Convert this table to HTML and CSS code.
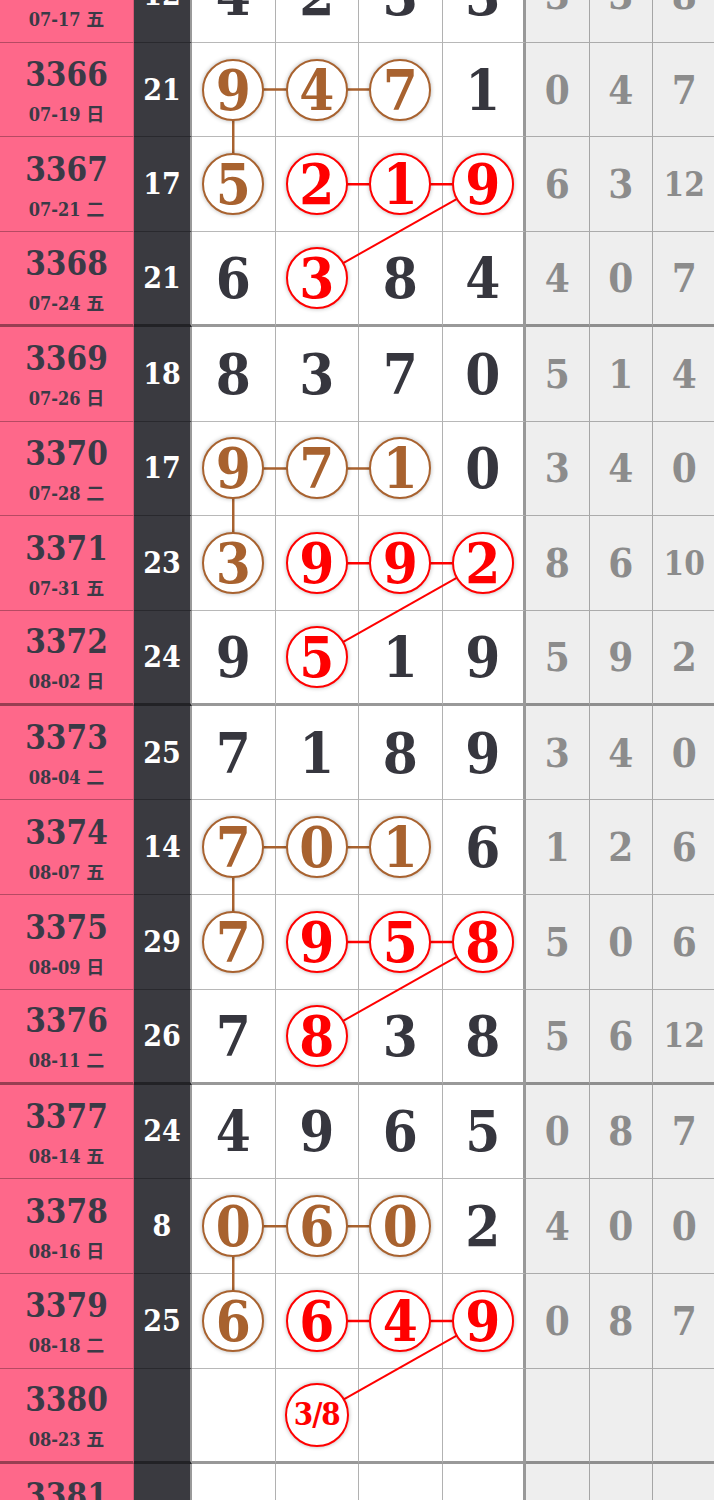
FILE: index.html
```html
<!DOCTYPE html>
<html>
<head>
    <meta charset="UTF-8">
    <title>走势图</title>
    <link rel="stylesheet" href="styles.css">
    <meta name="viewport" content="width=device-width, initial-scale=1">
</head>
<body>
    <div class="screen">
        <div class="board" id="board">
            <div class="grid" id="grid"></div>
            <svg class="links" id="links"></svg>
        </div>
    </div>
    <script>
        const rows = [
            { no: "3365", date: "07-17", week: "五", sum: "12", nums: ["4", "2", "3", "3"], miss: ["3", "3", "8"], balls: "...." },
            { no: "3366", date: "07-19", week: "日", sum: "21", nums: ["9", "4", "7", "1"], miss: ["0", "4", "7"], balls: "bbb." },
            { no: "3367", date: "07-21", week: "二", sum: "17", nums: ["5", "2", "1", "9"], miss: ["6", "3", "12"], balls: "brrr" },
            { no: "3368", date: "07-24", week: "五", sum: "21", nums: ["6", "3", "8", "4"], miss: ["4", "0", "7"], balls: ".r.." },
            { no: "3369", date: "07-26", week: "日", sum: "18", nums: ["8", "3", "7", "0"], miss: ["5", "1", "4"], balls: "...." },
            { no: "3370", date: "07-28", week: "二", sum: "17", nums: ["9", "7", "1", "0"], miss: ["3", "4", "0"], balls: "bbb." },
            { no: "3371", date: "07-31", week: "五", sum: "23", nums: ["3", "9", "9", "2"], miss: ["8", "6", "10"], balls: "brrr" },
            { no: "3372", date: "08-02", week: "日", sum: "24", nums: ["9", "5", "1", "9"], miss: ["5", "9", "2"], balls: ".r.." },
            { no: "3373", date: "08-04", week: "二", sum: "25", nums: ["7", "1", "8", "9"], miss: ["3", "4", "0"], balls: "...." },
            { no: "3374", date: "08-07", week: "五", sum: "14", nums: ["7", "0", "1", "6"], miss: ["1", "2", "6"], balls: "bbb." },
            { no: "3375", date: "08-09", week: "日", sum: "29", nums: ["7", "9", "5", "8"], miss: ["5", "0", "6"], balls: "brrr" },
            { no: "3376", date: "08-11", week: "二", sum: "26", nums: ["7", "8", "3", "8"], miss: ["5", "6", "12"], balls: ".r.." },
            { no: "3377", date: "08-14", week: "五", sum: "24", nums: ["4", "9", "6", "5"], miss: ["0", "8", "7"], balls: "...." },
            { no: "3378", date: "08-16", week: "日", sum: "8", nums: ["0", "6", "0", "2"], miss: ["4", "0", "0"], balls: "bbb." },
            { no: "3379", date: "08-18", week: "二", sum: "25", nums: ["6", "6", "4", "9"], miss: ["0", "8", "7"], balls: "brrr" },
            { no: "3380", date: "08-23", week: "五", sum: "", nums: ["", "3/8", "", ""], miss: ["", "", ""], balls: ".r.." },
            { no: "3381", date: "08-25", week: "日", sum: "", nums: ["", "", "", ""], miss: ["", "", ""], balls: "...." }
        ];

        const grid = document.getElementById("grid");

        rows.forEach((row, i) => {
            // every 4th row closes a block with a thick line
            const end = (i + 1) % 4 === 0 ? " block-end" : "";

            const noCell = document.createElement("div");
            noCell.className = "cell c-no" + end;
            noCell.innerHTML = `<span class="issue">${row.no}</span><span class="date">${row.date} <span class="week">${row.week}</span></span>`;
            grid.appendChild(noCell);

            const sumCell = document.createElement("div");
            sumCell.className = "cell c-sum" + end;
            sumCell.textContent = row.sum;
            grid.appendChild(sumCell);

            row.nums.forEach((n, col) => {
                const cell = document.createElement("div");
                cell.className = "cell c-num" + (col === 3 ? " edge" : "") + end;
                const mark = row.balls[col];
                if (mark !== ".") {
                    const ball = document.createElement("span");
                    ball.className = "ball " + (mark === "b" ? "brown" : "red") + (n.length > 1 ? " small" : "");
                    ball.id = `ball-${row.no}-${col}`;
                    ball.textContent = n;
                    cell.appendChild(ball);
                } else {
                    cell.textContent = n;
                }
                grid.appendChild(cell);
            });

            row.miss.forEach((m) => {
                const cell = document.createElement("div");
                cell.className = "cell c-miss" + (m.length > 1 ? " two" : "") + end;
                cell.textContent = m;
                grid.appendChild(cell);
            });
        });

        // chains: brown goes down-left then across, red goes across then down to col 2
        const chains = [];
        [3366, 3370, 3374, 3378].forEach((start) => {
            chains.push({ color: "#a8622f", cells: [[start + 1, 0], [start, 0], [start, 1], [start, 2]] });
            chains.push({ color: "#ff0000", cells: [[start + 1, 1], [start + 1, 2], [start + 1, 3], [start + 2, 1]] });
        });

        const board = document.getElementById("board");
        const svg = document.getElementById("links");
        const box = board.getBoundingClientRect();
        svg.setAttribute("width", box.width);
        svg.setAttribute("height", box.height);

        function center(no, col) {
            const el = document.getElementById(`ball-${no}-${col}`);
            const r = el.getBoundingClientRect();
            return [r.left + r.width / 2 - box.left, r.top + r.height / 2 - box.top];
        }

        chains.forEach((chain) => {
            for (let k = 0; k < chain.cells.length - 1; k++) {
                const a = center(...chain.cells[k]);
                const b = center(...chain.cells[k + 1]);
                const line = document.createElementNS("http://www.w3.org/2000/svg", "line");
                line.setAttribute("x1", a[0]);
                line.setAttribute("y1", a[1]);
                line.setAttribute("x2", b[0]);
                line.setAttribute("y2", b[1]);
                line.setAttribute("stroke", chain.color);
                line.setAttribute("stroke-width", a[1] === b[1] || a[0] === b[0] ? 2.5 : 2);
                svg.appendChild(line);
            }
        });
    </script>
</body>
</html>
```

FILE: styles.css
```css
body {
    margin: 0;
    background-color: #ffffff;
    font-family: "DejaVu Serif Condensed", "DejaVu Serif", serif;
    font-stretch: condensed;
    font-weight: bold;
}

.screen {
    width: 714px;
    overflow: hidden;
}

.board {
    position: relative;
    width: 716.5px;
    margin-top: -52px;
}

.grid {
    display: grid;
    grid-template-columns: 134px 58px repeat(4, 83.5px) repeat(3, 63.5px);
    grid-auto-rows: 94.73px;
}

.cell {
    box-sizing: border-box;
    display: flex;
    align-items: center;
    justify-content: center;
    border-bottom: 1px solid rgba(0, 0, 0, 0.28);
    line-height: 1;
}

.cell.block-end {
    border-bottom: 3px solid rgba(0, 0, 0, 0.4);
}

.c-no {
    flex-direction: column;
    padding-top: 3px;
    background-color: #fe688a;
    color: #3a3a46;
    border-right: 1px solid rgba(0, 0, 0, 0.15);
}

.issue {
    font-size: 33px;
    line-height: 38px;
}

.date {
    margin-top: 8px;
    font-size: 18px;
    line-height: 22px;
}

.week {
    font-family: "Noto Sans CJK SC", sans-serif;
    font-weight: bold;
    font-size: 18px;
}

.c-sum {
    background-color: #3a3a40;
    color: #ffffff;
    font-size: 30px;
    border-right: 2px solid #9a9a9a;
}

.c-num {
    background-color: #ffffff;
    color: #36363e;
    font-size: 56px;
    border-right: 1px solid rgba(0, 0, 0, 0.3);
}

.c-num.edge {
    border-right: 3px solid rgba(0, 0, 0, 0.4);
}

.c-miss {
    background-color: #eeeeee;
    color: #8c8c8c;
    font-size: 40px;
    border-right: 1px solid rgba(0, 0, 0, 0.3);
}

.c-miss.two {
    font-size: 33px;
}

.ball {
    position: relative;
    z-index: 2;
    box-sizing: border-box;
    width: 62px;
    height: 62px;
    border-radius: 50%;
    border: 2.5px solid;
    background-color: #ffffff;
    box-shadow: 0 0 4px rgba(0, 0, 0, 0.3);
    display: flex;
    align-items: center;
    justify-content: center;
    font-size: 56px;
}

.ball.brown {
    color: #a8622f;
    border-color: #a8622f;
}

.ball.red {
    color: #ff0000;
    border-color: #ff0000;
}

.ball.small {
    width: 64px;
    height: 64px;
    font-size: 31px;
    letter-spacing: -1px;
}

.links {
    position: absolute;
    left: 0;
    top: 0;
    z-index: 1;
    pointer-events: none;
}
```
